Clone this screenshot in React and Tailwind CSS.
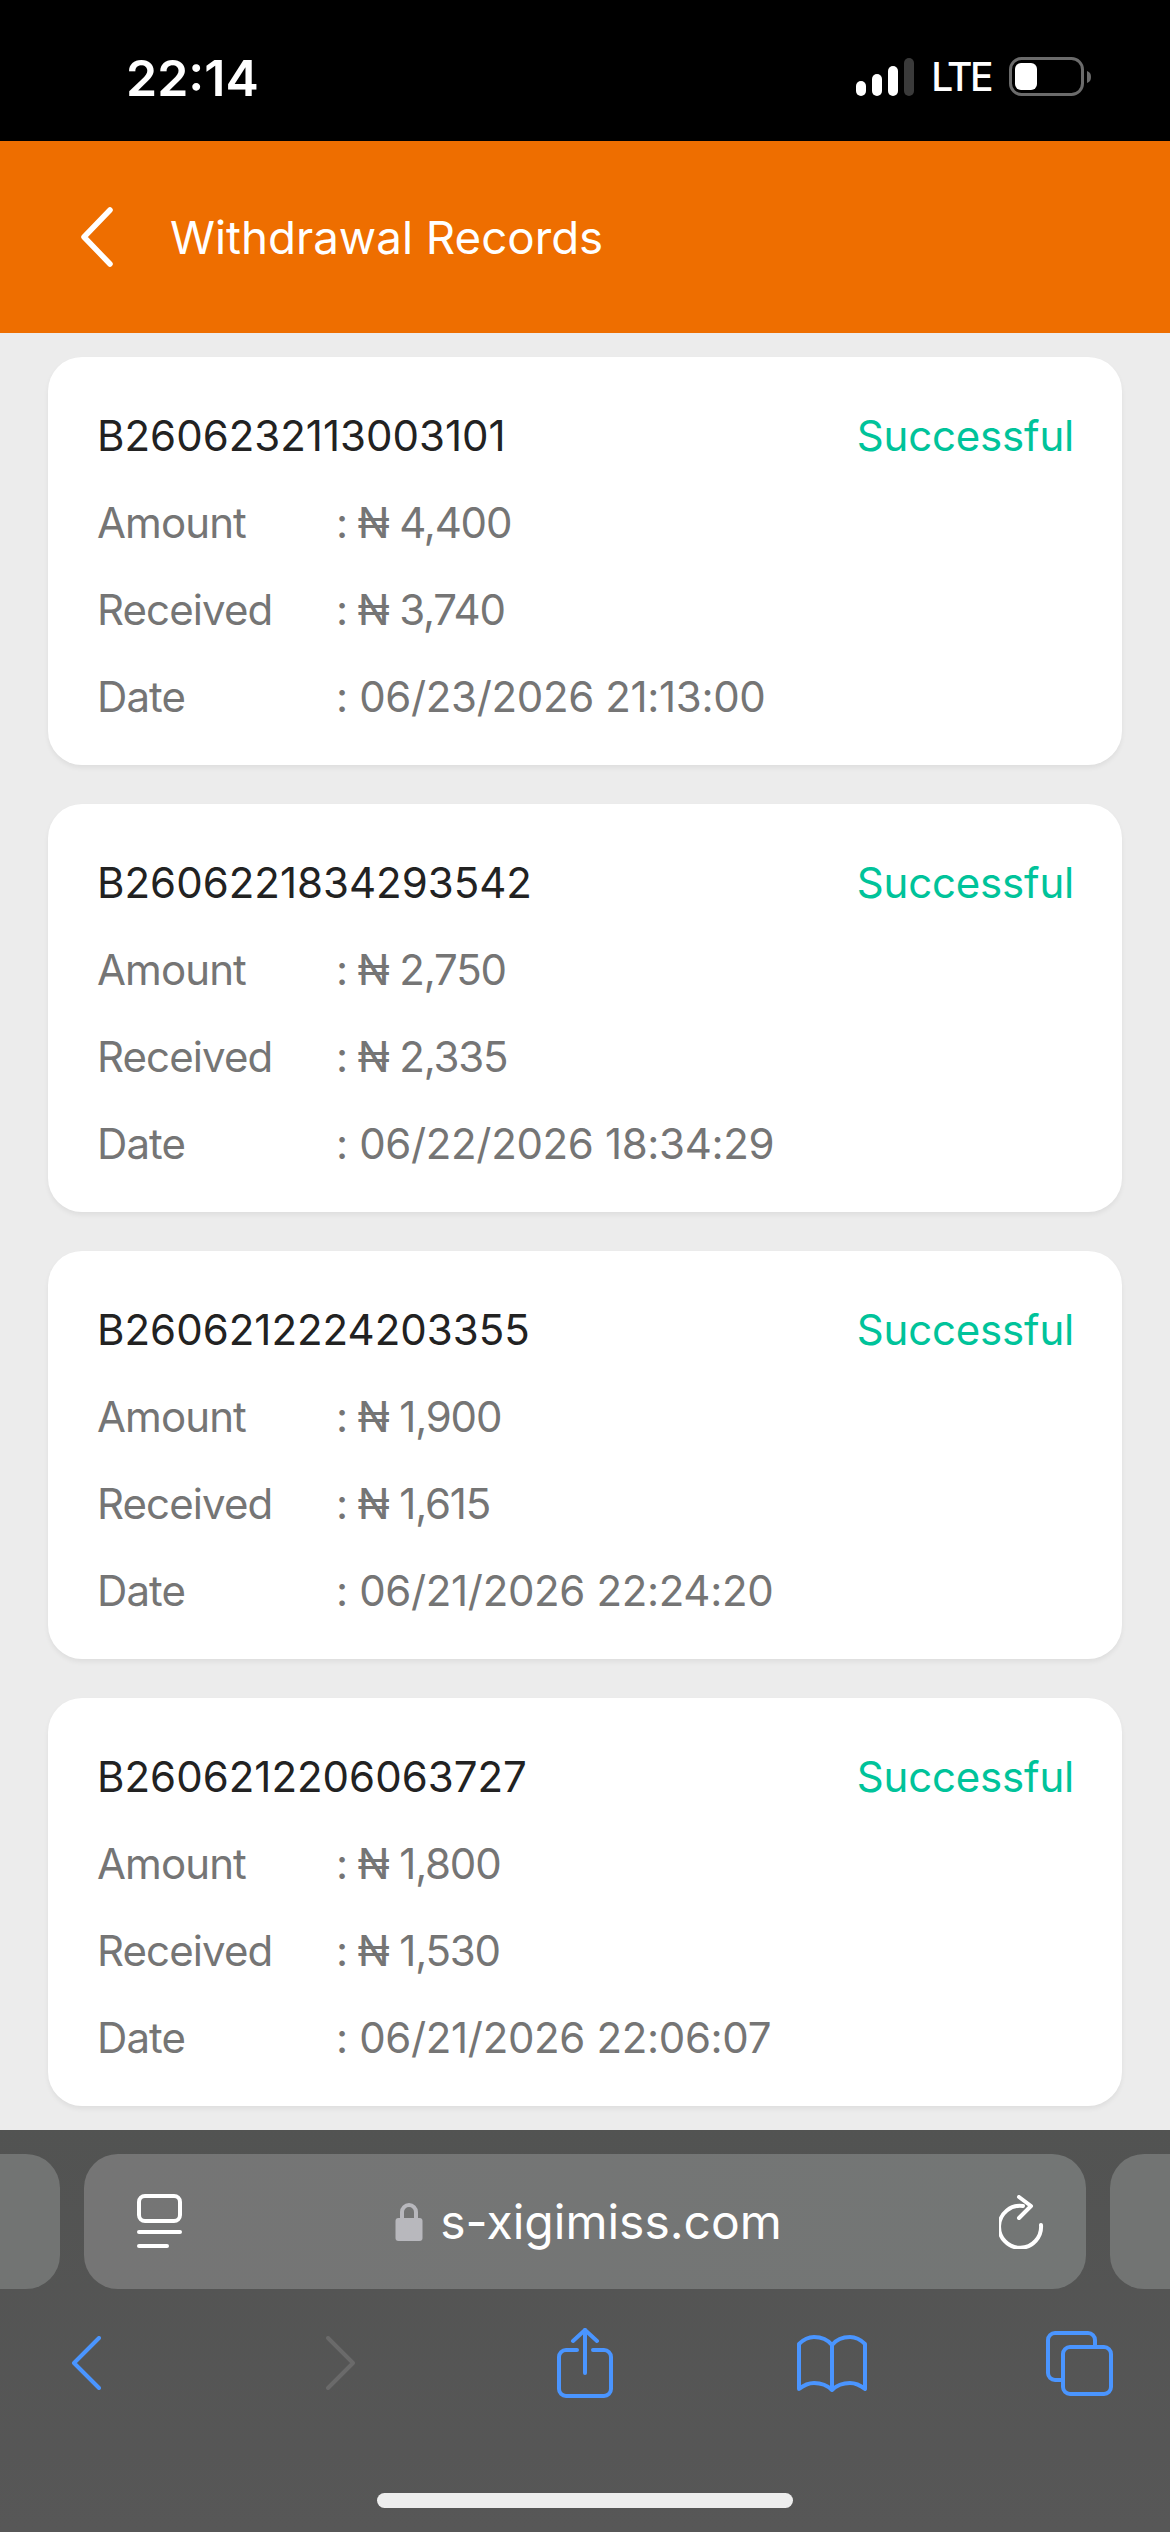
import React from 'react';

const records = [
  { id: 'B2606232113003101', amount: '₦ 4,400', received: '₦ 3,740', date: '06/23/2026 21:13:00' },
  { id: 'B2606221834293542', amount: '₦ 2,750', received: '₦ 2,335', date: '06/22/2026 18:34:29' },
  { id: 'B2606212224203355', amount: '₦ 1,900', received: '₦ 1,615', date: '06/21/2026 22:24:20' },
  { id: 'B2606212206063727', amount: '₦ 1,800', received: '₦ 1,530', date: '06/21/2026 22:06:07' },
];

const Row = ({ label, value, money }) => (
  <div className="flex h-[87px] items-center text-[#757575]">
    <span className="w-[239px] shrink-0 tracking-[-0.9px]">{label}</span>
    <span className={money ? 'tracking-[-1.2px]' : 'tracking-[-0.35px]'}>: {value}</span>
  </div>
);

const RecordCard = ({ record }) => (
  <div className="rounded-[34px] bg-white pb-[25px] pl-[49px] pr-[48px] pt-[35px] text-[42px] shadow-[0_3px_5px_rgba(0,0,0,0.06)]">
    <div className="flex h-[87px] items-center justify-between">
      <span className="text-[#222222]">{record.id}</span>
      <span className="tracking-[-0.2px] text-[#00c39a]">Successful</span>
    </div>
    <Row label="Amount" value={record.amount} money />
    <Row label="Received" value={record.received} money />
    <Row label="Date" value={record.date} />
  </div>
);

const StatusBar = () => (
  <div className="flex h-[141px] shrink-0 items-start justify-between bg-black pl-[126px] pr-[78px] pt-[49px] text-white">
    <span className="text-[50px] font-semibold leading-[58px]">22:14</span>
    <div className="flex items-center pt-[8px]">
      {/* signal bars */}
      <svg width="58" height="38" viewBox="0 0 58 38">
        <rect x="0" y="23" width="10" height="15" rx="5" fill="#fff" />
        <rect x="16" y="16" width="10" height="22" rx="5" fill="#fff" />
        <rect x="32" y="8" width="10" height="30" rx="5" fill="#fff" />
        <rect x="48" y="0" width="10" height="38" rx="5" fill="#3a3a3a" />
      </svg>
      <span className="ml-[17px] text-[39px] font-medium leading-[40px] tracking-[-2.5px]">LTE</span>
      {/* battery */}
      <svg className="ml-[18px]" width="83" height="40" viewBox="0 0 83 40">
        <rect x="1.5" y="1.5" width="72" height="36" rx="11" fill="none" stroke="#6b6b6b" strokeWidth="3" />
        <rect x="6" y="6" width="22" height="27" rx="6" fill="#fff" />
        <path d="M78 14 C81 15 82 17 82 20 C82 23 81 25 78 26 Z" fill="#6b6b6b" />
      </svg>
    </div>
  </div>
);

const Header = () => (
  <div className="flex h-[192px] shrink-0 items-center bg-[#ee6e00] pl-[80px] text-white">
    <svg width="34" height="60" viewBox="0 0 34 60" fill="none" stroke="#fff" strokeWidth="5.5" strokeLinecap="round" strokeLinejoin="round">
      <path d="M30 3 L4 30 L30 57" />
    </svg>
    <span className="ml-[56px] pt-[2px] text-[45.7px] leading-none">Withdrawal Records</span>
  </div>
);

const BLUE = '#4a95ff';

const SafariBar = () => (
  <div className="flex h-[402px] shrink-0 flex-col bg-gradient-to-b from-[#525352] to-[#575757]">
    <div className="mt-[24px] flex h-[135px] gap-[24px]">
      <div className="w-[60px] shrink-0 rounded-r-[34px] bg-[#727473]" />
      <div className="flex w-[1002px] shrink-0 items-center rounded-[34px] bg-gradient-to-r from-[#757575] to-[#737675] pl-[53px] pr-[41px]">
        <svg width="45" height="56" viewBox="0 0 45 56" fill="none" stroke="#fff" strokeWidth="4" strokeLinecap="round">
          <rect x="2" y="2" width="41" height="25" rx="6" />
          <path d="M2 38 H43" />
          <path d="M2 52 H30" />
        </svg>
        <div className="flex flex-1 items-center justify-center pr-[4px]">
          <svg width="28" height="40" viewBox="0 0 28 40" fill="none">
            <path d="M7 17 V10 a7 7 0 0 1 14 0 V17" stroke="#b8b8bd" strokeWidth="4" />
            <rect x="0.5" y="16" width="27" height="23" rx="3" fill="#b8b8bd" />
          </svg>
          <span className="ml-[17px] text-[48px] leading-none text-white">s-xigimiss.com</span>
        </div>
        <svg width="46" height="54" viewBox="0 0 46 54" fill="none" stroke="#fff" strokeWidth="4" strokeLinecap="round" strokeLinejoin="round">
          <path d="M24 11 A21 21 0 1 0 42 30" />
          <path d="M20 2 L32 11 L20 23" />
        </svg>
      </div>
      <div className="flex-1 rounded-l-[34px] bg-[#727473]" />
    </div>
    {/* browser nav icons */}
    <div className="mt-[38px] flex h-[72px] items-center pl-[71px]">
      <svg width="30" height="54" viewBox="0 0 30 54" fill="none" stroke={BLUE} strokeWidth="4" strokeLinecap="round" strokeLinejoin="round">
        <path d="M28 2 L3 27 L28 52" />
      </svg>
      <svg className="ml-[225px]" width="30" height="54" viewBox="0 0 30 54" fill="none" stroke="#6a6a6a" strokeWidth="4" strokeLinecap="round" strokeLinejoin="round">
        <path d="M2 2 L27 27 L2 52" />
      </svg>
      <svg className="ml-[201px]" width="56" height="70" viewBox="0 0 56 70" fill="none" stroke={BLUE} strokeWidth="4" strokeLinecap="round" strokeLinejoin="round">
        <path d="M20 22 H9 a7 7 0 0 0 -7 7 V61 a7 7 0 0 0 7 7 H47 a7 7 0 0 0 7 -7 V29 a7 7 0 0 0 -7 -7 H36" />
        <path d="M28 2 V45" />
        <path d="M16 13 L28 2 L40 13" />
      </svg>
      <svg className="ml-[184px]" width="70" height="57" viewBox="0 0 70 57" fill="none" stroke={BLUE} strokeWidth="4" strokeLinecap="round" strokeLinejoin="round">
        <path d="M35 10 C31 5 24 2 17 2 C11 2 6 5 2 9 V54 C7 50 12 48 17 48 C24 48 31 51 35 55 C39 51 46 48 53 48 C58 48 63 50 68 54 V9 C64 5 59 2 53 2 C46 2 39 5 35 10 V55" />
      </svg>
      <svg className="ml-[179px]" width="67" height="65" viewBox="0 0 67 65" fill="none" stroke={BLUE} strokeWidth="4" strokeLinecap="round" strokeLinejoin="round">
        <path d="M49 14 V9 a7 7 0 0 0 -7 -7 H9 a7 7 0 0 0 -7 7 V42 a7 7 0 0 0 7 7 H15" />
        <rect x="17" y="16" width="48" height="47" rx="7" />
      </svg>
    </div>
    <div className="mx-auto mt-[94px] h-[15px] w-[416px] rounded-full bg-[#eeeeee]" />
  </div>
);

export default function App() {
  return (
    <div className="flex h-[2532px] w-[1170px] flex-col overflow-hidden bg-[#ececec] font-['Inter',sans-serif]">
      <StatusBar />
      <Header />
      <div className="flex flex-1 flex-col gap-[39px] px-[48px] pt-[24px]">
        {records.map((r) => (
          <RecordCard key={r.id} record={r} />
        ))}
      </div>
      <SafariBar />
    </div>
  );
}
